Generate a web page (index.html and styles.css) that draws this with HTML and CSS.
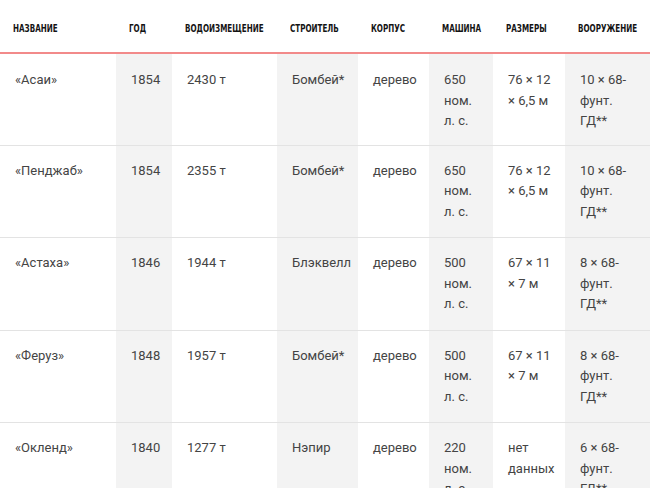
FILE: index.html
```html
<!DOCTYPE html>
<html lang="ru">
<head>
<meta charset="utf-8">
<title>Корабли</title>
<link rel="stylesheet" href="styles.css">
</head>
<body>
<table class="ships">
  <colgroup>
    <col class="c1"><col class="c2 shade"><col class="c3"><col class="c4 shade"><col class="c5"><col class="c6 shade"><col class="c7"><col class="c8 shade">
  </colgroup>
  <thead>
    <tr>
      <th><span class="hd">Название</span></th>
      <th><span class="hd">Год</span></th>
      <th><span class="hd">Водоизмещение</span></th>
      <th><span class="hd">Строитель</span></th>
      <th><span class="hd">Корпус</span></th>
      <th><span class="hd">Машина</span></th>
      <th><span class="hd">Размеры</span></th>
      <th><span class="hd">Вооружение</span></th>
    </tr>
  </thead>
  <tbody>
    <tr>
      <td>«Асаи»</td><td>1854</td><td>2430 т</td><td>Бомбей*</td><td>дерево</td><td>650 ном. л.&nbsp;с.</td><td>76 × 12 × 6,5 м</td><td>10 × 68-фунт. ГД**</td>
    </tr>
    <tr>
      <td>«Пенджаб»</td><td>1854</td><td>2355 т</td><td>Бомбей*</td><td>дерево</td><td>650 ном. л.&nbsp;с.</td><td>76 × 12 × 6,5 м</td><td>10 × 68-фунт. ГД**</td>
    </tr>
    <tr>
      <td>«Астаха»</td><td>1846</td><td>1944 т</td><td>Блэквелл</td><td>дерево</td><td>500 ном. л.&nbsp;с.</td><td>67 × 11 × 7 м</td><td>8 × 68-фунт. ГД**</td>
    </tr>
    <tr>
      <td>«Феруз»</td><td>1848</td><td>1957 т</td><td>Бомбей*</td><td>дерево</td><td>500 ном. л.&nbsp;с.</td><td>67 × 11 × 7 м</td><td>8 × 68-фунт. ГД**</td>
    </tr>
    <tr>
      <td>«Окленд»</td><td>1840</td><td>1277 т</td><td>Нэпир</td><td>дерево</td><td>220 ном. л.&nbsp;с.</td><td>нет данных</td><td>6 × 68-фунт. ГД**</td>
    </tr>
  </tbody>
</table>
</body>
</html>
```

FILE: styles.css
```css
html, body {
  margin: 0;
  padding: 0;
  background: #ffffff;
}

.ships {
  width: 650px;
  border-collapse: collapse;
  table-layout: fixed;
  font-family: Roboto, "Liberation Sans", sans-serif;
  font-size: 13px;
  line-height: 20.5px;
  color: #444444;
}

.c1 { width: 116px; }
.c2 { width: 56px; }
.c3 { width: 105px; }
.c4 { width: 81px; }
.c5 { width: 71px; }
.c6 { width: 64px; }
.c7 { width: 72px; }
.c8 { width: 85px; }

.shade { background: #f3f3f3; }

.ships th {
  font-family: "DejaVu Sans Condensed", "Liberation Sans", sans-serif;
  font-weight: 700;
  font-size: 10.5px;
  line-height: 14px;
  text-transform: uppercase;
  text-align: left;
  color: #141414;
  padding: 21px 0 17px 13px;
  border-bottom: 2px solid #f28a8a;
  white-space: nowrap;
  background: #ffffff;
}

.hd {
  display: inline-block;
  transform: scaleX(0.76);
  transform-origin: left center;
}

.ships td {
  vertical-align: top;
  text-align: left;
  padding: 15px 10px 15px 15px;
  border-top: 1px solid #e3e3e3;
}

.ships tbody tr:first-child td {
  border-top: none;
  padding-top: 16px;
  padding-bottom: 13px;
}
```
